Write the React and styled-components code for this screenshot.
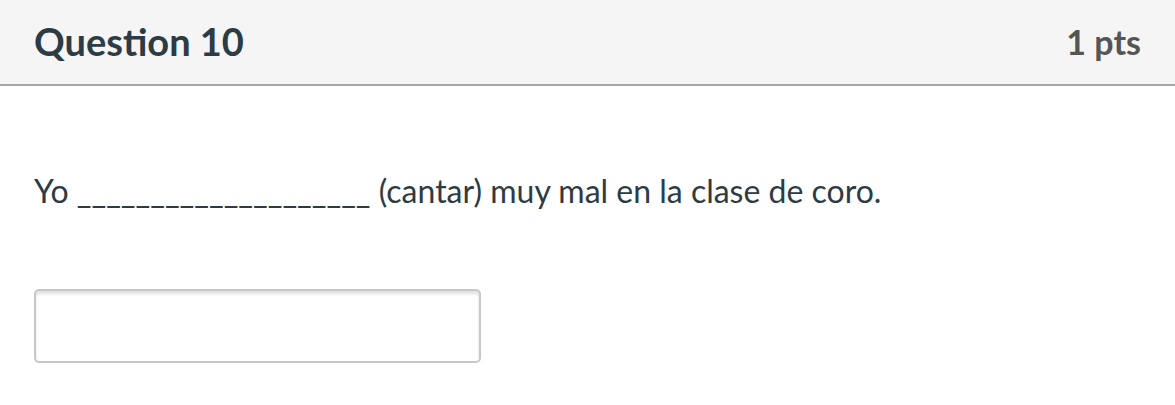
import React from "react";
import styled, { createGlobalStyle } from "styled-components";

const Global = createGlobalStyle`
  html, body { margin: 0; padding: 0; background: #ffffff; }
  body { font-family: Lato, "Open Sans", sans-serif; }
`;

const Page = styled.div`
  width: 1175px;
  height: 405px;
  background: #ffffff;
  display: flex;
  flex-direction: column;
`;

const Header = styled.header`
  height: 86px;
  box-sizing: border-box;
  background: #f5f5f5;
  border-bottom: 2px solid #a8a8a8;
  display: flex;
  align-items: center;
  justify-content: space-between;
  padding: 0 34px 2px 34px;
`;

const Title = styled.h2`
  margin: 0;
  font-family: Lato, sans-serif;
  font-weight: 700;
  font-size: 38px;
  color: #2d3b45;
`;

const Points = styled.div`
  font-family: Lato, sans-serif;
  font-weight: 700;
  font-size: 34px;
  color: #555555;
`;

const Body = styled.div`
  padding: 85px 34px 0 34px;
  display: flex;
  flex-direction: column;
  gap: 78px;
`;

const QuestionText = styled.p`
  margin: 0;
  font-family: Lato, sans-serif;
  font-size: 32px;
  line-height: 40px;
  color: #2d3b45;
`;

const Answer = styled.input`
  width: 447px;
  height: 74px;
  box-sizing: border-box;
  border: 2px solid #c7c7c7;
  border-radius: 5px;
  box-shadow: inset 0 3px 3px rgba(0, 0, 0, 0.12);
  background: #fff;
  font-family: Lato, sans-serif;
  font-size: 28px;
  outline: none;
`;

export default function App() {
  return (
    <Page>
      <Global />
      <Header>
        <Title>Question 10</Title>
        <Points>1 pts</Points>
      </Header>
      <Body>
        <QuestionText>Yo ____________________ (cantar) muy mal en la clase de coro.</QuestionText>
        <Answer type="text" aria-label="Answer" />
      </Body>
    </Page>
  );
}
